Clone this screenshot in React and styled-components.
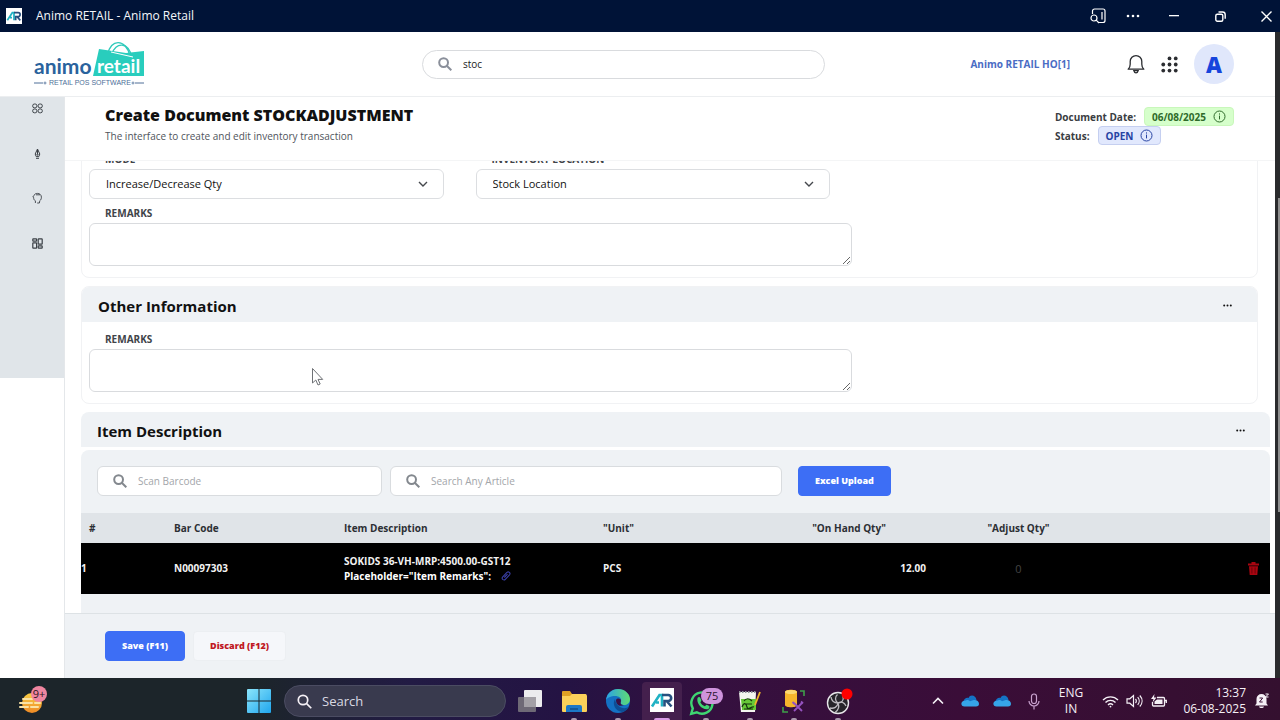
import React, { useLayoutEffect, useRef, useState } from 'react';
import styled, { createGlobalStyle } from 'styled-components';

const GlobalStyle = createGlobalStyle`
  * {
    box-sizing: border-box;
  }

  body {
    margin: 0;
    overflow: hidden;
    background: #fff;
    color: #111;
    font-family: 'Open Sans', 'Noto Sans', sans-serif;
    font-size: 10px;
    line-height: 16px;
  }

  button,
  input,
  select,
  textarea {
    font: inherit;
    color: inherit;
  }

  button {
    padding: 0;
    border: 0;
    background: none;
  }

  svg {
    display: block;
    flex: none;
  }
`;

const Screen = styled.div`
  display: flex;
  flex-direction: column;
  height: 100vh;
`;

/* window title bar */

const TitleBar = styled.header`
  display: flex;
  align-items: center;
  flex: none;
  height: 32px;
  padding-left: 6px;
  background: #001337;
  color: #f4f6fa;
`;

const WindowTitle = styled.span`
  margin: 0 auto 0 14px;
  font-size: 12px;
`;

const WindowTools = styled.div`
  display: flex;
  gap: ${(props) => props.$gap}px;
  margin-right: ${(props) => props.$end || 0}px;
`;

const WindowButton = styled.button`
  display: flex;
  align-items: center;
  justify-content: center;
  width: 28px;
  height: 32px;
  color: #fff;
`;

/* application frame */

const Window = styled.div`
  display: flex;
  flex: 1;
  min-height: 0;
`;

const Application = styled.div`
  display: flex;
  flex: 1;
  flex-direction: column;
  min-width: 0;
`;

const ScrollTrack = styled.div`
  display: flex;
  flex-direction: column;
  align-items: flex-end;
  flex: none;
  width: 5px;
  padding: 166px 0;
  background: #2a2b2d;
`;

const ScrollThumb = styled.div`
  flex: 1;
  width: 2px;
  background: #8f8f8f;
`;

const AppHeader = styled.header`
  display: grid;
  grid-template-columns: 1fr 403px 1fr;
  align-items: center;
  flex: none;
  height: 65px;
  padding: 0 41px 0 13px;
  border-bottom: 1px solid #eceef0;
`;

const LogoLink = styled.a`
  justify-self: start;
  margin-left: 20px;
`;

const HeaderSearch = styled.label`
  display: flex;
  align-items: center;
  gap: 11px;
  height: 29px;
  padding: 0 15px;
  border: 1px solid #d9dbde;
  border-radius: 15px;
  color: #8a8f9a;

  & input {
    flex: 1;
    min-width: 0;
    padding: 0;
    border: 0;
    outline: 0;
    background: none;
    color: #222;
  }
`;

const HeaderTools = styled.div`
  display: flex;
  align-items: center;
  justify-self: end;
  color: #2b2d31;
`;

const Company = styled.a`
  margin-right: 57px;
  color: #4a6cc4;
  font-weight: 700;
  text-decoration: none;
`;

const ToolButton = styled.button`
  display: flex;
  margin-right: 16px;
`;

const Avatar = styled.button`
  width: 40px;
  height: 40px;
  border-radius: 50%;
  background: #e0e7fb;
  color: #1644dc;
  font-size: 22px;
  font-weight: 800;
  line-height: 40px;
`;

const Body = styled.div`
  display: flex;
  flex: 1;
  min-height: 0;
`;

const Sidebar = styled.aside`
  flex: none;
  width: 65px;
  border-right: 1px solid #e4e7ea;
`;

const Nav = styled.nav`
  display: flex;
  flex-direction: column;
  align-items: center;
  gap: 23px;
  padding: 0 0 124px 10px;
  background: #e0e5e9;
  color: #3b4046;
`;

const NavLink = styled.a`
  display: flex;
  align-items: center;
  height: 22px;
  color: inherit;
`;

const Main = styled.main`
  display: flex;
  flex: 1;
  flex-direction: column;
  min-width: 0;
`;

/* document heading */

const DocumentHeader = styled.div`
  display: flex;
  justify-content: space-between;
  align-items: flex-start;
  flex: none;
  height: 64px;
  padding: 7px 41px 0 40px;
  border-bottom: 1px solid #f4f5f6;
`;

const Title = styled.h1`
  margin: 0;
  font-size: 16px;
  font-weight: 800;
  line-height: 22px;
`;

const Subtitle = styled.p`
  margin: 2px 0 0;
  color: #50545c;
`;

const MetaRow = styled.div`
  display: flex;
  align-items: center;
  gap: 8px;
  height: 19px;
  margin-top: ${(props) => (props.$first ? 3 : 0)}px;
  color: #3a3d42;
  font-weight: 700;
`;

const Badge = styled.span`
  display: flex;
  align-items: center;
  gap: 7px;
  height: 19px;
  padding: 0 7px;
  border: 1px solid ${(props) => (props.$green ? '#c9f7bb' : '#c5cff0')};
  border-radius: 4px;
  background: ${(props) => (props.$green ? '#d6ffcb' : '#e1e8fd')};
  color: ${(props) => (props.$green ? '#2f6b2a' : '#2743a3')};
`;

/* cards and form */

const ScrollArea = styled.div`
  flex: 1;
  min-height: 0;
  padding: 0 5px 0 16px;
  overflow-y: auto;
  scrollbar-width: none;
`;

const Card = styled.section`
  margin: 0 12px 8px 0;
  border: 1px solid #f1f2f4;
  border-radius: 8px;
  overflow: hidden;
`;

const SectionHeader = styled.div`
  display: flex;
  align-items: center;
  justify-content: space-between;
  height: 35px;
  padding: 2px 25px 0 16px;
  border-radius: ${(props) => (props.$standalone ? '8px 8px 0 0' : '0')};
  background: #eff2f5;

  & h2 {
    margin: 0;
    font-size: 15px;
    font-weight: 700;
    line-height: 24px;
  }
`;

const CardBody = styled.div`
  display: flex;
  flex-direction: column;
  gap: 6px;
  padding: ${(props) => (props.$first ? 15 : 9)}px 7px 11px;
`;

const FieldRow = styled.div`
  display: grid;
  grid-template-columns: 1fr 1fr;
  gap: 32px;
  max-width: 741px;
`;

const Field = styled.div`
  display: flex;
  flex-direction: column;
  gap: 2px;
  max-width: 763px;

  & label {
    padding-left: 16px;
    color: #414449;
    font-weight: 700;
  }
`;

const SelectBox = styled.div`
  display: grid;
  align-items: center;

  & select,
  & svg {
    grid-area: 1 / 1;
  }

  & select {
    width: 100%;
    height: 30px;
    padding: 0 16px;
    border: 1px solid #dcdee1;
    border-radius: 6px;
    background: #fff;
    font-size: 11px;
    appearance: none;
  }

  & svg {
    justify-self: end;
    margin-right: 15px;
    pointer-events: none;
  }
`;

const TextArea = styled.textarea`
  display: block;
  width: 100%;
  height: 43px;
  border: 1px solid #d9dbde;
  border-radius: 6px;
  background: #fff;
`;

/* items */

const ItemPanel = styled.div`
  margin-top: 3px;
  padding: 16px 0 32px;
  border-radius: 8px 8px 0 0;
  background: #eff2f5;
`;

const ItemTools = styled.div`
  display: flex;
  align-items: center;
  gap: 8px;
  padding: 0 16px 17px;
`;

const ItemSearch = styled.label`
  display: flex;
  align-items: center;
  gap: 11px;
  flex: 0 1 ${(props) => props.$width}px;
  height: 30px;
  padding: 0 15px;
  border: 1px solid #d9dcdf;
  border-radius: 6px;
  background: #fff;
  color: #83888e;

  & input {
    flex: 1;
    min-width: 0;
    padding: 0;
    border: 0;
    outline: 0;
  }

  & input::placeholder {
    color: #a3a6aa;
  }
`;

const Button = styled.button`
  height: 30px;
  padding: 0 16px;
  border: 1px solid ${(props) => (props.$danger ? '#eceff2' : '#3d6ef5')};
  border-radius: 4px;
  background: ${(props) => (props.$danger ? '#f5f7fa' : '#3d6ef5')};
  color: ${(props) => (props.$danger ? '#c01823' : '#fff')};
  font-size: 9px;
  font-weight: 800;
`;

const UploadButton = styled(Button)`
  margin-left: 8px;
`;

const ItemTable = styled.table`
  width: 100%;
  border-collapse: collapse;
  table-layout: fixed;

  & th {
    height: 30px;
    padding: 0 8px;
    background: #e0e4e8;
    color: #2c2f34;
    font-weight: 700;
    text-align: left;
  }

  & td {
    height: 51px;
    padding: 0 8px;
    background: #000;
    color: #f2f2f2;
    font-weight: 700;
    line-height: 15px;
  }

  & td:first-child {
    padding: 0;
  }

  & td:last-child {
    padding-right: 11px;
  }

  & .center {
    text-align: center;
  }

  & .right {
    text-align: right;
  }
`;

const Remark = styled.div`
  display: flex;
  align-items: center;
  gap: 10px;
  color: #fff;
`;

const LinkButton = styled.button`
  color: #3b3fa8;
`;

const QtyInput = styled.input`
  width: 64px;
  padding: 0;
  border: 0;
  background: none;
  color: #444;
  font-size: 11px;
  font-weight: 400;
  text-align: center;
`;

const DeleteButton = styled.button`
  display: block;
  margin-left: auto;
  color: #a80510;
`;

const Actions = styled.footer`
  display: flex;
  gap: 8px;
  flex: none;
  height: 65px;
  padding: 17px 40px;
  border-top: 1px solid #dde2e5;
  background: #eff2f5;
`;

/* desktop task bar */

const TaskBar = styled.footer`
  display: flex;
  align-items: center;
  flex: none;
  height: 42px;
  padding: 4px 10px 0 19px;
  overflow: hidden;
  background: linear-gradient(90deg, #1c252a 0%, #1c252a 20%, #221b44 32%, #241343 44%, #35103f 56%, #3a0d38 75%, #34102f 100%);
  color: #f5f0f6;
`;

const Widgets = styled.button`
  display: flex;
  width: 228px;
`;

const TaskSearch = styled.label`
  display: flex;
  align-items: center;
  gap: 10px;
  flex: 0 1 222px;
  min-width: 0;
  height: 32px;
  margin: 0 2px 0 13px;
  padding: 0 12px;
  border: 1px solid #4b4c62;
  border-radius: 16px;
  background: #393a4e;

  & input {
    flex: 1;
    min-width: 0;
    padding: 0;
    border: 0;
    outline: 0;
    background: none;
    font-size: 13px;
  }

  & input::placeholder {
    color: #d9d9e2;
  }
`;

const TaskApp = styled.button`
  display: flex;
  flex-direction: column;
  align-items: center;
  justify-content: space-between;
  flex: none;
  width: 40px;
  height: 38px;
  margin: 0 2px;
  padding-top: 6px;
  border-radius: 4px 4px 0 0;
  background: ${(props) => (props.$active ? '#44204d' : 'none')};

  &::after {
    content: '';
    width: ${(props) => (props.$active ? 16 : 6)}px;
    height: 2px;
    border-radius: 2px 2px 0 0;
    background: ${(props) => (props.$active ? '#d79be6' : '#a99aad')};
    opacity: ${(props) => (props.$idle ? 0 : 1)};
  }
`;

const Tray = styled.div`
  display: flex;
  align-items: center;
  margin-left: auto;
`;

const TrayButton = styled.button`
  display: flex;
  justify-content: center;
  width: ${(props) => props.$width}px;
`;

const TrayText = styled.div`
  width: ${(props) => props.$width}px;
  margin-right: 6px;
  font-size: 12px;
  line-height: 16px;
  text-align: ${(props) => props.$align};
`;

const Pointer = styled.svg`
  position: absolute;
  left: 311px;
  top: 367px;
`;

const SearchIcon = ({ size = 14, width = 2 }) => (
  <svg width={size} height={size} viewBox="0 0 14 14" fill="none" stroke="currentColor" strokeWidth={width}>
    <circle cx="5.6" cy="5.6" r="4.4" />
    <path d="M9 9l4.3 4.3" />
  </svg>
);

const DotsIcon = () => (
  <svg width="9" height="3" viewBox="0 0 9 3" fill="currentColor">
    <circle cx="1.2" cy="1.5" r="1" />
    <circle cx="4.5" cy="1.5" r="1" />
    <circle cx="7.8" cy="1.5" r="1" />
  </svg>
);

const ChevronIcon = () => (
  <svg width="12" height="8" viewBox="0 0 12 8" fill="none" stroke="#45484d" strokeWidth="1.4">
    <path d="M2 2l4 4 4-4" />
  </svg>
);

const InfoIcon = () => (
  <svg width="13" height="13" viewBox="0 0 13 13" fill="none" stroke="currentColor" strokeWidth="1">
    <circle cx="6.5" cy="6.5" r="5.5" />
    <path d="M6.5 5.6v3.8M6.5 3.4v1.2" />
  </svg>
);

const BrandMark = ({ size }) => (
  <svg width={size} height={size} viewBox="0 0 24 24" fill="none">
    <path fill="#fff" d="M0 0h24v24H0z" />
    <path stroke="#20b2c4" strokeWidth="2.6" d="M2 18.500L9.500 7H12v11.500M6 14.500h3" />
    <path stroke="#27507f" strokeWidth="2.6" d="M12 7h6.200a3 3 0 0 1 0 6h-3.700v5.500M17 13.500l4.500 5" />
  </svg>
);

const Logo = () => (
  <svg width="112" height="48" viewBox="0 0 112 48" role="img" aria-label="Animo Retail">
    <g fill="none" stroke="#2fcabb" strokeWidth="1.4">
      <path d="M75 14C77 -1 93 -2 97 16" />
      <path d="M79 14C82 2 96 1 99 18" />
    </g>
    <path fill="#29cdbd" d="M66 9l27 4 18-2v25H60z" />
    <path fill="none" stroke="#fff" strokeWidth="1" d="M78 12l22 5" />
    <text x="1" y="34" fill="#2a639d" fontFamily="Lato, sans-serif" fontSize="21" fontWeight="700">animo</text>
    <text x="64" y="33" fill="#fff" fontFamily="Lato, sans-serif" fontSize="19" fontWeight="700">retail</text>
    <text x="16" y="45" fill="#4e6f98" fontFamily="Liberation Sans, sans-serif" fontSize="7">RETAIL POS SOFTWARE</text>
    <path stroke="#4e6f98" strokeWidth="1" d="M1 43h9M102 43h9" />
    <g fill="none" stroke="#4e6f98" strokeWidth="0.8">
      <circle cx="12" cy="43" r="1" />
      <circle cx="100" cy="43" r="1" />
    </g>
  </svg>
);

const NavIcons = {
  Dashboard: () => (
    <svg width="11" height="11" viewBox="0 0 11 11" fill="none" stroke="currentColor">
      <rect x="0.7" y="1" width="4.2" height="3.8" rx="1.7" />
      <rect x="6.1" y="1" width="4.2" height="3.8" rx="1.7" />
      <rect x="0.7" y="6" width="4.2" height="3.8" rx="1.7" />
      <rect x="6.1" y="6" width="4.2" height="3.8" rx="1.7" />
    </svg>
  ),
  Design: () => (
    <svg width="11" height="11" viewBox="0 0 11 11" fill="none" stroke="currentColor">
      <path d="M5.5 1L3.2 6l1 2.6h2.6l1-2.6zM5.5 1v5M4 10.3h3" />
      <circle cx="5.5" cy="6.6" r="0.6" />
    </svg>
  ),
  Insights: () => (
    <svg width="11" height="12" viewBox="0 0 11 12" fill="none" stroke="currentColor" strokeWidth="0.9">
      <path d="M3.4 11V8.8C1.9 8 1.6 6.9 1.7 5.6L.8 5l1.1-1.4C2.4 2.1 3.8 1.4 5.4 1.4c2.4 0 4 1.6 4 3.8 0 1.600-.5 2.700-1.600 3.500L7.400 11H5.200" />
      <path d="M4 2.8h4" />
    </svg>
  ),
  Modules: () => (
    <svg width="11" height="11" viewBox="0 0 11 11" fill="none" stroke="currentColor" strokeWidth="1.2">
      <rect x="0.8" y="0.8" width="3.8" height="2.4" rx="0.5" />
      <rect x="0.8" y="4.8" width="3.8" height="5.4" rx="0.5" />
      <rect x="6.2" y="0.8" width="4" height="5.4" rx="0.5" />
      <rect x="6.2" y="7.8" width="4" height="2.4" rx="0.5" />
    </svg>
  ),
};

const BellIcon = () => (
  <svg width="18" height="20" viewBox="0 0 18 20" fill="none" stroke="currentColor" strokeWidth="1.3">
    <path d="M1.2 15.2h15.6c-1.4-1.3-2-2.5-2-5V7.4a5.8 5.8 0 0 0-11.6 0v2.8c0 2.5-.6 3.7-2 5z" strokeLinejoin="round" />
    <path d="M6.8 16.6c.4 1.6 1.2 2.3 2.2 2.3s1.800-.7 2.200-2.300z" />
  </svg>
);

const GridIcon = () => (
  <svg width="17" height="17" viewBox="0 0 18 18" fill="currentColor">
    {[9, 15.6].map((x) => <circle key={x} cx={x} cy="2.600" r="2" />)}
    {[2.4, 9, 15.6].map((x) => <circle key={x} cx={x} cy="9" r="2" />)}
    {[2.4, 9, 15.6].map((x) => <circle key={x} cx={x} cy="15.400" r="2" />)}
  </svg>
);

const PaperclipIcon = () => (
  <svg width="10" height="10" viewBox="0 0 10 10" fill="none" stroke="currentColor" strokeWidth="1.100">
    <path d="M1.300 6.400l4.600-4.900a1.700 1.700 0 0 1 2.600 2.300L4.300 8.300a1.800 1.800 0 0 1-3-1.900zM3.300 6.500l3.200-3.400" />
  </svg>
);

const TrashIcon = () => (
  <svg width="11" height="13" viewBox="0 0 11 13" fill="currentColor">
    <path d="M3.500 0h4v1.400H11v2H0v-2h3.500zM1 4.200h9L9.300 13H1.700z" />
    <path stroke="#5c0309" strokeWidth="0.800" d="M3.900 5.500v6M7.100 5.500v6" />
  </svg>
);

const WidgetIcon = () => (
  <svg width="30" height="30" viewBox="0 0 30 30">
    <defs>
      <linearGradient id="sun" x1="0" y1="0" x2="0" y2="1">
        <stop offset="0" stopColor="#f9cf45" />
        <stop offset="1" stopColor="#ee8a25" />
      </linearGradient>
    </defs>
    <circle cx="13" cy="17" r="10" fill="url(#sun)" />
    <path stroke="#fbe3a4" strokeWidth="2" strokeLinecap="round" d="M4 13h9M1 17h12M16 17h5M1 21h8M12 21h7" />
    <circle cx="20" cy="8" r="8" fill="#ef86a0" />
    <text x="20" y="12" fill="#2b1620" fontSize="11" textAnchor="middle">9+</text>
  </svg>
);

const WindowsIcon = () => (
  <svg width="24" height="24" viewBox="0 0 24 24">
    <defs>
      <linearGradient id="win" x1="0" y1="0" x2="1" y2="1">
        <stop offset="0" stopColor="#8be5fb" />
        <stop offset="1" stopColor="#1fa6ee" />
      </linearGradient>
    </defs>
    <path fill="url(#win)" d="M0 1a1 1 0 0 1 1-1h10.500v11.500H0zM12.500 0H23a1 1 0 0 1 1 1v10.500H12.500zM0 12.500h11.500V24H1a1 1 0 0 1-1-1zM12.500 12.500H24V23a1 1 0 0 1-1 1H12.500z" />
  </svg>
);

const DesktopsIcon = () => (
  <svg width="26" height="26" viewBox="0 0 26 26">
    <rect x="7" y="2" width="18" height="17" rx="1" fill="#ececee" />
    <rect x="1" y="9" width="18" height="15" rx="1" fill="#77727c" opacity="0.9" />
    <path fill="#a3a0a6" d="M7 9h12v10H7z" />
  </svg>
);

const FolderIcon = () => (
  <svg width="26" height="26" viewBox="0 0 26 26">
    <path fill="#dfa125" d="M1 4a1 1 0 0 1 1-1h7l2 3h14v5H1z" />
    <path fill="#fbd15a" d="M1 8h8l2-2h13a2 2 0 0 1 2 2v15a1 1 0 0 1-1 1H2a1 1 0 0 1-1-1z" />
    <path fill="#1b78c7" d="M5 24v-5a2 2 0 0 1 2-2h12a2 2 0 0 1 2 2v5z" />
    <path stroke="#0f4f8c" strokeWidth="1.500" d="M9 21h8" />
  </svg>
);

const EdgeIcon = () => (
  <svg width="26" height="26" viewBox="0 0 26 26">
    <defs>
      <linearGradient id="edge" x1="0" y1="0" x2="1" y2="0">
        <stop offset="0" stopColor="#2ba3e6" />
        <stop offset="1" stopColor="#5fdb73" />
      </linearGradient>
    </defs>
    <circle cx="13" cy="13" r="12" fill="#1471c3" />
    <path fill="url(#edge)" d="M1 12C2 5 7 1 13 1c7 0 12 5 12 10 0 4-3 6-6 6-2 0-4-1-3-3 1-4-2-6-6-6-4 0-8 2-9 4z" />
    <path fill="#0d4e95" d="M10 11c-3 5 0 12 7 13 3-.5 5-2 7-5-6 3-13 0-14-8z" />
    <path fill="#3a1245" d="M11 12c1-2 5-2 5 1-1 3 0 4 3 4-4 2-8 0-8-5z" />
  </svg>
);

const WhatsAppIcon = () => (
  <svg width="36" height="28" viewBox="0 0 36 28">
    <path fill="none" stroke="#3fd672" strokeWidth="2.400" d="M3.200 25.800l1.600-5.400A10.600 10.600 0 1 1 8.800 24.300z" />
    <path fill="#3fd672" d="M9.500 10c1-1.500 2.400-1.300 3 .2l.8 2c.3.8-1 1.600-1 2 1 2 2.500 3.300 4.500 4 .6 0 1.300-1.700 2-1.400l2.400 1.200c.8.600 0 2.800-1.200 3.200C15 22.500 8 16 9.500 10z" />
    <rect x="13" y="0" width="22" height="16" rx="8" fill="#cf94dd" />
    <text x="24" y="12" fill="#2b1430" fontSize="11" textAnchor="middle">75</text>
  </svg>
);

const NotepadIcon = () => (
  <svg width="26" height="26" viewBox="0 0 26 26">
    <path fill="#f4f5ef" d="M2 4h17l-1 20H4z" />
    <path stroke="#8d9098" strokeWidth="2" strokeDasharray="1.500 1.500" d="M2 4h17" />
    <path fill="#66c837" d="M4 11h15v11H5z" />
    <path fill="none" stroke="#17350f" strokeWidth="1.200" d="M5 19c2-5 4-4 5 0s4-1 7 0M7 13c2-3 5-3 8 0M8 16h7M7 21h9" />
    <path stroke="#f0b429" strokeWidth="1.800" d="M23 4l-5 13" />
  </svg>
);

const DatabaseIcon = () => (
  <svg width="26" height="26" viewBox="0 0 26 26" fill="none">
    <path fill="#f7b52c" d="M4 4c0-3 12-3 12 0v13c0 3-12 3-12 0z" />
    <ellipse cx="10" cy="4" rx="6" ry="2" fill="#fcd873" />
    <path stroke="#3f9f4a" strokeWidth="1.600" d="M19 3h4v5M2 19v5h5" />
    <path stroke="#9553c0" strokeWidth="1.800" d="M13 15l8 8M21 15l-8 8M11.500 14l2 2M20 13.500l2 2" />
  </svg>
);

const ObsIcon = () => (
  <svg width="32" height="28" viewBox="0 0 32 28">
    <circle cx="16" cy="15" r="10.500" fill="#26242a" stroke="#e8e6ea" strokeWidth="1.400" />
    <g fill="none" stroke="#bdbac0" strokeWidth="1.300">
      <path d="M15.500 6.500c-3 2.500-2.500 6.500.5 8.500" />
      <path d="M8 20c4 1 7.500-1 8-5" />
      <path d="M24 18c-1.500-3.500-5-5-8-3" />
      <path d="M21 8c1 4-1 7-5 7M16 15c-4 0-6.500-2.500-7-6M16 15c1.500 3.500.5 7-3 9.500" />
    </g>
    <circle cx="25" cy="6" r="5.500" fill="#f00" />
  </svg>
);

const CloudIcon = () => (
  <svg width="18" height="12" viewBox="0 0 18 12">
    <path fill="#1472c4" d="M3 9C1 5 5 2 7.500 3 9-1 15 0 15.500 5L9 8z" />
    <path fill="#36a5e8" d="M3.500 11.500C-1 11.500-.5 5.500 4 5.800c2-1.600 4-.8 5 .5l3-1c3-1 6 1 6 3.400 0 1.800-1 2.800-3 2.800z" />
  </svg>
);

const FORM_FIELDS = [
  { id: 'mode', label: 'MODE', value: 'Increase/Decrease Qty' },
  { id: 'location', label: 'INVENTORY LOCATION', value: 'Stock Location' },
];

const TASK_APPS = [
  { name: 'Task View', Icon: DesktopsIcon, idle: true },
  { name: 'File Explorer', Icon: FolderIcon },
  { name: 'Edge', Icon: EdgeIcon },
  { name: 'Animo Retail', Icon: () => <BrandMark size={24} />, active: true },
  { name: 'WhatsApp', Icon: WhatsAppIcon },
  { name: 'Notepad++', Icon: NotepadIcon },
  { name: 'Database', Icon: DatabaseIcon },
  { name: 'OBS Studio', Icon: ObsIcon },
];

const COLUMNS = [85, 170, 259, 169, 170, 169, undefined];

const RemarksField = ({ id }) => (
  <Field>
    <label htmlFor={id}>REMARKS</label>
    <TextArea id={id} />
  </Field>
);

const WindowTitleBar = () => (
  <TitleBar>
    <BrandMark size={16} />
    <WindowTitle>Animo RETAIL - Animo Retail</WindowTitle>
    <WindowTools $gap={7} $end={13}>
      <WindowButton aria-label="Search in page">
        <svg width="16" height="16" viewBox="0 0 16 16" fill="none" stroke="currentColor" strokeWidth="1.200">
          <path d="M2.500 6V3a2 2 0 0 1 2-2H13a2 2 0 0 1 2 2v9.500a2 2 0 0 1-2 2H8.500M12 4v7.500" />
          <circle cx="4" cy="10" r="3" />
          <path d="M6.200 12.200L9 15" />
        </svg>
      </WindowButton>
      <WindowButton aria-label="More">
        <svg width="14" height="4" viewBox="0 0 14 4" fill="currentColor">
          <circle cx="2" cy="2" r="1.300" />
          <circle cx="7" cy="2" r="1.300" />
          <circle cx="12" cy="2" r="1.300" />
        </svg>
      </WindowButton>
    </WindowTools>
    <WindowTools $gap={18}>
      <WindowButton aria-label="Minimize">
        <svg width="10" height="2" viewBox="0 0 10 2"><path fill="currentColor" d="M0 0h10v1.300H0z" /></svg>
      </WindowButton>
      <WindowButton aria-label="Restore">
        <svg width="11" height="11" viewBox="0 0 11 11" fill="none" stroke="currentColor" strokeWidth="1.400">
          <rect x="0.800" y="3.200" width="7" height="7" rx="1.500" />
          <path d="M3.500 1h4a2.700 2.700 0 0 1 2.700 2.700v4" />
        </svg>
      </WindowButton>
      <WindowButton aria-label="Close">
        <svg width="11" height="11" viewBox="0 0 11 11" fill="none" stroke="currentColor" strokeWidth="1.400">
          <path d="M.5.5l10 10M10.500.5l-10 10" />
        </svg>
      </WindowButton>
    </WindowTools>
  </TitleBar>
);

const ApplicationHeader = () => {
  const [query, setQuery] = useState('stoc');

  return (
    <AppHeader>
      <LogoLink href="#home"><Logo /></LogoLink>
      <HeaderSearch>
        <SearchIcon />
        <input aria-label="Search" value={query} onChange={(event) => setQuery(event.target.value)} />
      </HeaderSearch>
      <HeaderTools>
        <Company href="#company">Animo RETAIL HO[1]</Company>
        <ToolButton aria-label="Notifications"><BellIcon /></ToolButton>
        <ToolButton aria-label="Apps"><GridIcon /></ToolButton>
        <Avatar>A</Avatar>
      </HeaderTools>
    </AppHeader>
  );
};

const Items = () => {
  const [qty, setQty] = useState('0');

  return (
    <ItemPanel>
      <ItemTools>
        <ItemSearch $width={285}>
          <SearchIcon />
          <input aria-label="Barcode" placeholder="Scan Barcode" />
        </ItemSearch>
        <ItemSearch $width={392}>
          <SearchIcon />
          <input aria-label="Article" placeholder="Search Any Article" />
        </ItemSearch>
        <UploadButton>Excel Upload</UploadButton>
      </ItemTools>
      <ItemTable>
        <colgroup>
          {COLUMNS.map((width, index) => <col key={index} width={width} />)}
        </colgroup>
        <thead>
          <tr>
            <th>#</th>
            <th>Bar Code</th>
            <th>Item Description</th>
            <th>"Unit"</th>
            <th className="center">"On Hand Qty"</th>
            <th className="center">"Adjust Qty"</th>
            <th aria-label="Actions" />
          </tr>
        </thead>
        <tbody>
          <tr>
            <td>1</td>
            <td>N00097303</td>
            <td>
              SOKIDS 36-VH-MRP:4500.00-GST12
              <Remark>
                Placeholder="Item Remarks":
                <LinkButton aria-label="Attach"><PaperclipIcon /></LinkButton>
              </Remark>
            </td>
            <td>PCS</td>
            <td className="right">12.00</td>
            <td className="center">
              <QtyInput aria-label="Adjust quantity" value={qty} onChange={(event) => setQty(event.target.value)} />
            </td>
            <td><DeleteButton aria-label="Delete item"><TrashIcon /></DeleteButton></td>
          </tr>
        </tbody>
      </ItemTable>
    </ItemPanel>
  );
};

const StockDocument = () => {
  const scrollRef = useRef(null);

  useLayoutEffect(() => {
    scrollRef.current.scrollTop = 26;
  }, []);

  return (
    <Main>
      <DocumentHeader>
        <div>
          <Title>Create Document STOCKADJUSTMENT</Title>
          <Subtitle>The interface to create and edit inventory transaction</Subtitle>
        </div>
        <div>
          <MetaRow $first>
            Document Date:
            <Badge $green>06/08/2025 <InfoIcon /></Badge>
          </MetaRow>
          <MetaRow>
            Status:
            <Badge>OPEN <InfoIcon /></Badge>
          </MetaRow>
        </div>
      </DocumentHeader>
      <ScrollArea ref={scrollRef}>
        <Card>
          <CardBody $first>
            <FieldRow>
              {FORM_FIELDS.map(({ id, label, value }) => (
                <Field key={id}>
                  <label htmlFor={id}>{label}</label>
                  <SelectBox>
                    <select id={id}><option>{value}</option></select>
                    <ChevronIcon />
                  </SelectBox>
                </Field>
              ))}
            </FieldRow>
            <RemarksField id="remarks" />
          </CardBody>
        </Card>
        <Card>
          <SectionHeader>
            <h2>Other Information</h2>
            <button aria-label="Section menu"><DotsIcon /></button>
          </SectionHeader>
          <CardBody>
            <RemarksField id="other-remarks" />
          </CardBody>
        </Card>
        <SectionHeader $standalone>
          <h2>Item Description</h2>
          <button aria-label="Item menu"><DotsIcon /></button>
        </SectionHeader>
        <Items />
      </ScrollArea>
      <Actions>
        <Button>Save (F11)</Button>
        <Button $danger>Discard (F12)</Button>
      </Actions>
    </Main>
  );
};

const DesktopTaskBar = () => (
  <TaskBar>
    <Widgets aria-label="Widgets"><WidgetIcon /></Widgets>
    <button aria-label="Start"><WindowsIcon /></button>
    <TaskSearch>
      <SearchIcon size={15} width={1.6} />
      <input aria-label="Search the desktop" placeholder="Search" />
    </TaskSearch>
    {TASK_APPS.map(({ name, Icon, active, idle }) => (
      <TaskApp key={name} aria-label={name} $active={active} $idle={idle}><Icon /></TaskApp>
    ))}
    <Tray>
      <TrayButton $width={32} aria-label="Hidden icons">
        <svg width="12" height="8" viewBox="0 0 12 8" fill="none" stroke="currentColor" strokeWidth="1.600"><path d="M1 6.500l5-5 5 5" /></svg>
      </TrayButton>
      <TrayButton $width={32} aria-label="Cloud storage"><CloudIcon /></TrayButton>
      <TrayButton $width={32} aria-label="Cloud storage, work"><CloudIcon /></TrayButton>
      <TrayButton $width={32} aria-label="Microphone">
        <svg width="12" height="17" viewBox="0 0 12 17" fill="none" stroke="#c9a3cf" strokeWidth="1.200">
          <rect x="3.500" y="1" width="5" height="9.500" rx="2.500" />
          <path d="M1 8a5 5 0 0 0 10 0M6 13v3.500" />
        </svg>
      </TrayButton>
      <TrayText $width={42} $align="center">ENG<br />IN</TrayText>
      <TrayButton $width={24} aria-label="Network">
        <svg width="17" height="13" viewBox="0 0 17 13" fill="none" stroke="currentColor" strokeWidth="1.400">
          <path d="M1 5a10.500 10.500 0 0 1 15 0M3.500 7.500a7 7 0 0 1 10 0M6 10a3.600 3.600 0 0 1 5 0" />
          <circle cx="8.500" cy="11.600" r="0.900" fill="currentColor" stroke="none" />
        </svg>
      </TrayButton>
      <TrayButton $width={24} aria-label="Volume">
        <svg width="17" height="14" viewBox="0 0 17 14" fill="none" stroke="currentColor" strokeWidth="1.200">
          <path d="M1 4.800h2.800L7.500 1.500v11L3.800 9.200H1zM9.500 5c1 1.200 1 2.800 0 4M11.700 3.200c2 2.200 2 5.400 0 7.600M13.800 1.500c3 3.300 3 7.700 0 11" />
        </svg>
      </TrayButton>
      <TrayButton $width={24} aria-label="Battery">
        <svg width="17" height="14" viewBox="0 0 17 14" fill="none" stroke="currentColor" strokeWidth="1.300">
          <path d="M7 3.500h6.500a1 1 0 0 1 1 1V11a1 1 0 0 1-1 1H3.500a1 1 0 0 1-1-1V8M15 6.500h1.300V9" />
          <path fill="currentColor" d="M4.500 10V7.500L7 5.500h5.500V10z" stroke="none" />
          <path d="M4.500 0L1 5h2.500L2.500 8.500 6.500 3.500H4z" fill="currentColor" stroke="none" />
        </svg>
      </TrayButton>
      <TrayText $width={76} $align="right">13:37<br />06-08-2025</TrayText>
      <TrayButton $width={18} aria-label="Notifications">
        <svg width="15" height="16" viewBox="0 0 15 16">
          <path fill="currentColor" d="M1 12.500l1.500-2V6a5 5 0 0 1 10 0v4.500l1.500 2zM5 13.500h5c-.5 2-4.500 2-5 0z" />
          <path fill="none" stroke="#3a1236" d="M5.500 5h3.200l-3.200 4h3.200" />
          <path fill="none" stroke="currentColor" d="M11.500 1h3l-3 3h3" />
        </svg>
      </TrayButton>
    </Tray>
  </TaskBar>
);

const App = () => (
  <>
    <GlobalStyle />
    <Screen>
      <WindowTitleBar />
      <Window>
        <Application>
          <ApplicationHeader />
          <Body>
            <Sidebar>
              <Nav>
                {Object.entries(NavIcons).map(([name, Icon]) => (
                  <NavLink key={name} href={`#${name.toLowerCase()}`} aria-label={name}><Icon /></NavLink>
                ))}
              </Nav>
            </Sidebar>
            <StockDocument />
          </Body>
        </Application>
        <ScrollTrack><ScrollThumb /></ScrollTrack>
      </Window>
      <DesktopTaskBar />
    </Screen>
    <Pointer width="14" height="20" viewBox="0 0 14 20" fill="#fff" stroke="#6f7276" aria-hidden="true">
      <path d="M1.500 1.500v14.500l3.300-3 2.200 5 2.200-1-2.200-4.600h4.700z" />
    </Pointer>
  </>
);

export default App;
